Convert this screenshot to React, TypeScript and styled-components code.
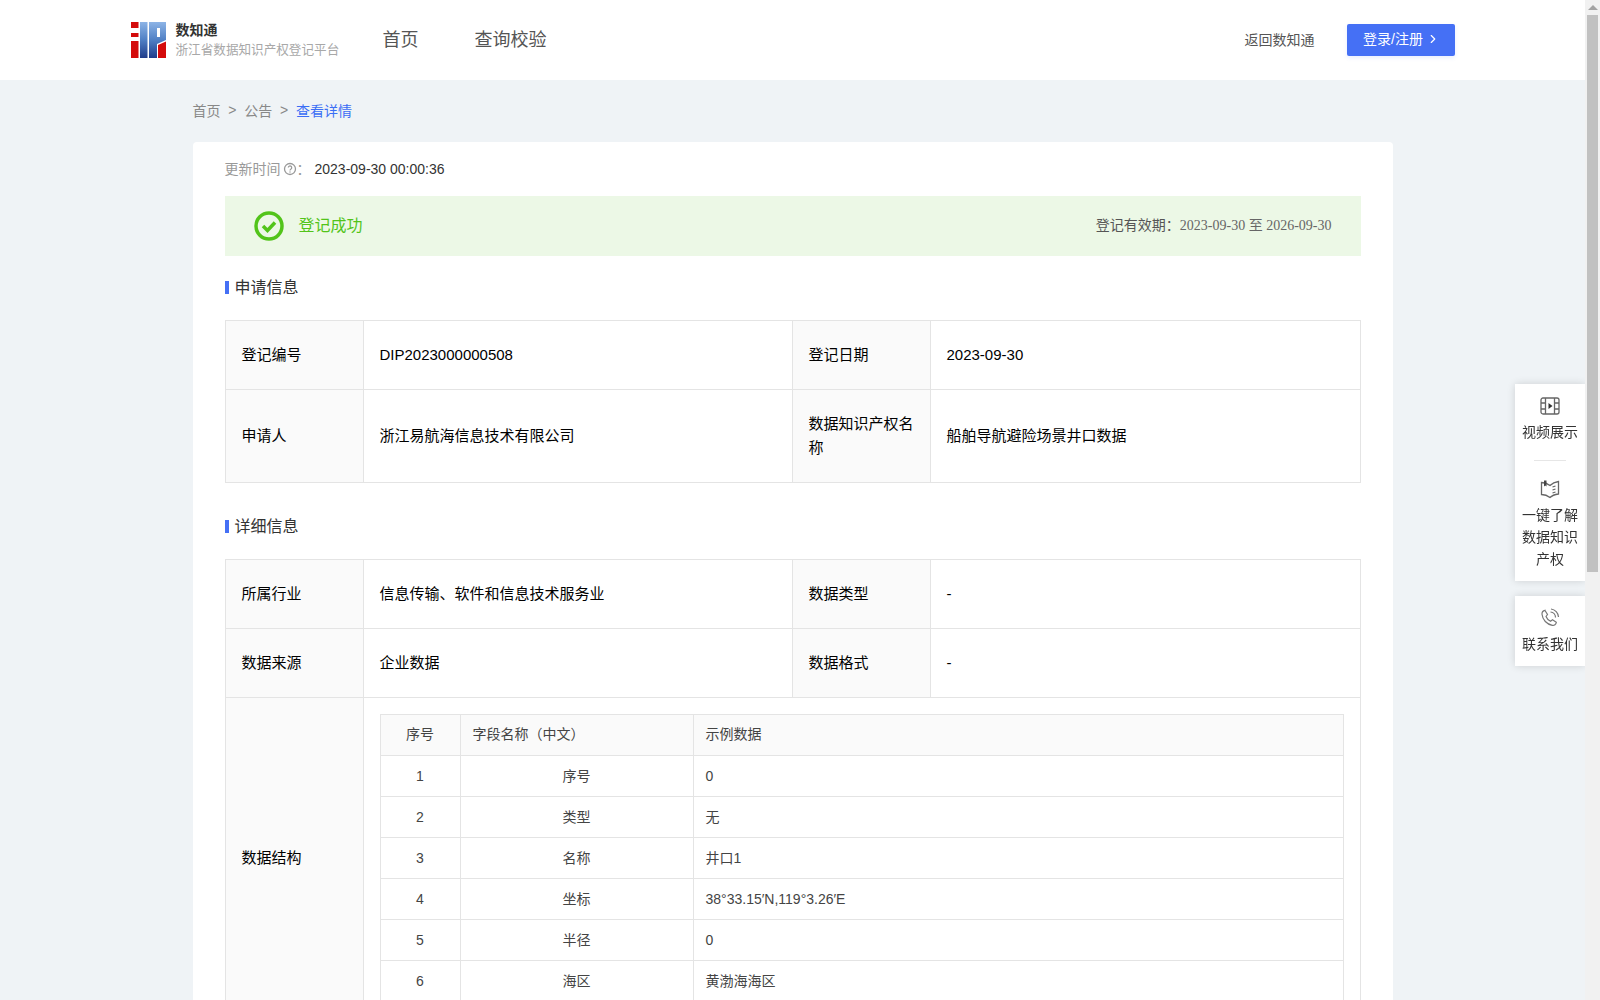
import React from "react";
import styled, { createGlobalStyle } from "styled-components";
import { ChevronRight } from "lucide-react";

const GlobalStyle = createGlobalStyle`
  html, body {
    scrollbar-width: none;
  }
  body {
    margin: 0;
    background: #eff3f6;
    font-family: "Liberation Sans", "Noto Sans CJK SC", sans-serif;
    color: #333;
  }
  * { box-sizing: border-box; }
`;

const Page = styled.div`
  width: 1585px;
  min-height: 1741px;
`;

const Header = styled.header`
  height: 80px;
  background: #fff;
`;

const HeaderInner = styled.div`
  width: 1324px;
  height: 100%;
  margin: 0 auto;
  display: flex;
  align-items: center;
`;

const Brand = styled.div`
  display: flex;
  align-items: center;
  gap: 10px;
  width: 252px;
`;

const BrandText = styled.div`
  display: flex;
  flex-direction: column;
`;

const BrandName = styled.div`
  font-size: 14px;
  font-weight: 700;
  line-height: 20px;
  margin-top: -2px;
  color: #333;
`;

const BrandSub = styled.div`
  font-size: 12.6px;
  line-height: 18px;
  margin-top: 1px;
  color: #a8a8a8;
  white-space: nowrap;
`;

const Nav = styled.nav`
  display: flex;
  gap: 56px;
  flex: 1;
  padding-bottom: 4px;
`;

const NavItem = styled.a`
  font-size: 18px;
  color: #555;
`;

const BackLink = styled.a`
  font-size: 14px;
  color: #555;
  margin-right: 32px;
  padding-bottom: 3px;
`;

const LoginButton = styled.button`
  width: 108px;
  height: 32px;
  border: 0;
  border-radius: 2px;
  background: #4570f5;
  color: #fff;
  font: inherit;
  font-size: 14px;
  padding: 0 0 5px 2px;
  display: flex;
  align-items: center;
  justify-content: center;
  gap: 3px;
  box-shadow: 0 2px 4px rgba(69, 112, 245, 0.12);
`;

const ButtonChevron = styled(ChevronRight)`
  margin-top: 3px;
`;

const Main = styled.main`
  width: 1200px;
  margin: 0 auto;
`;

const Crumbs = styled.div`
  height: 62px;
  padding-bottom: 3px;
  display: flex;
  align-items: center;
  font-size: 14px;
  color: #888;
`;

const CrumbSep = styled.span`
  margin: 0 7.8px;
`;

const CrumbCurrent = styled.span`
  color: #3b6ef5;
`;

const Card = styled.div`
  background: #fff;
  border-radius: 4px;
  padding: 0 32px;
`;

const UpdateRow = styled.div`
  height: 54px;
  display: flex;
  align-items: center;
  font-size: 14px;
  color: #999;
`;

const UpdateLabel = styled.span`
  padding-bottom: 2px;
`;

const UpdateValue = styled.span`
  color: #333;
  margin-left: 4px;
`;

const Banner = styled.div`
  height: 60px;
  background: #ecf8e6;
  display: flex;
  align-items: center;
  justify-content: space-between;
  padding: 0 29px;
  margin-bottom: 20px;
`;

const BannerStatus = styled.div`
  display: flex;
  align-items: center;
  gap: 15px;
  font-size: 16px;
  color: #52c41a;
`;

const BannerLabel = styled.span`
  padding-bottom: 4px;
`;

const BannerRange = styled.div`
  font-size: 14px;
  color: #555;
  padding-bottom: 4px;
`;

const SerifDate = styled.span`
  font-family: "Liberation Serif", "Noto Sans CJK SC", serif;
  color: #666;
`;

const SectionTitle = styled.h3`
  margin: 0 0 22px;
  height: 22px;
  display: flex;
  align-items: center;
  gap: 6px;
  font-size: 16px;
  font-weight: 400;
  color: #333;
  &::before {
    content: "";
    width: 4px;
    height: 13px;
    background: #4570f5;
  }
`;

const SectionText = styled.span`
  padding-bottom: 2px;
`;

const InfoTable = styled.table`
  width: 1135px;
  table-layout: fixed;
  border-collapse: collapse;
  margin-bottom: 32px;
`;

const InfoRow = styled.tr<{ $h: number }>`
  height: ${(p) => p.$h}px;
`;

const LabelCell = styled.td`
  border: 1px solid #e4e4e4;
  background: #fafafa;
  padding: 0 16px;
  font-size: 15px;
  line-height: 24px;
  color: #000;
`;

const ValueCell = styled.td`
  border: 1px solid #e4e4e4;
  padding: 0 16px;
  font-size: 15px;
  line-height: 24px;
  color: #000;
`;

const NestedTable = styled.table`
  width: 964px;
  table-layout: fixed;
  border-collapse: collapse;
  font-size: 14px;
`;

const NestedCell = styled.td<{ $align?: string; $head?: boolean }>`
  height: 41px;
  border: 1px solid #e4e4e4;
  padding: 0 12px ${(p) => (p.$head ? "2px" : "0")};
  text-align: ${(p) => p.$align || "left"};
  color: #444;
  background: ${(p) => (p.$head ? "#fafafa" : "#fff")};
`;

const SideDock = styled.aside`
  position: fixed;
  right: 15px;
  top: 384px;
  width: 70px;
  display: flex;
  flex-direction: column;
  gap: 15px;
`;

const DockPanel = styled.div`
  background: #fff;
  box-shadow: 0 0 8px rgba(0, 0, 0, 0.14);
  display: flex;
  flex-direction: column;
  align-items: center;
  padding: 12px 0 11px;
  font-size: 14px;
  line-height: 22px;
  color: #333;
  text-align: center;
`;

const DockItem = styled.div`
  display: flex;
  flex-direction: column;
  align-items: center;
  gap: 5px;
`;

const DockDivider = styled.div`
  width: 32px;
  height: 1px;
  background: #e6e6e6;
  margin: 17px 0 18px;
`;

const ScrollTrack = styled.div`
  position: fixed;
  top: 0;
  right: 0;
  bottom: 0;
  width: 15px;
  background: #f1f1f1;
`;

const ScrollArrow = styled.div`
  width: 0;
  height: 0;
  margin: 5px auto 0;
  border-left: 5px solid transparent;
  border-right: 5px solid transparent;
  border-bottom: 5px solid #a3a3a3;
`;

const ScrollThumb = styled.div`
  width: 11px;
  height: 557px;
  margin: 5px 2px 0;
  background: #c1c1c1;
`;

const LogoMark = () => (
  <svg width="35" height="36" viewBox="0 0 35 36">
    <defs>
      <linearGradient id="logoBlue" x1="0" y1="0" x2="0" y2="1">
        <stop offset="0" stopColor="#8db4e6" />
        <stop offset="0.5" stopColor="#4f7fc4" />
        <stop offset="1" stopColor="#1f3c8a" />
      </linearGradient>
    </defs>
    <path d="M0 0h7.500v6H0zM0 11h7.500v4H0zM0 19h7.500v17H0z" fill="#d40b0b" />
    <rect x="9" y="0" width="7.500" height="36" fill="url(#logoBlue)" />
    <path
      d="M18 0h17v18L26 22v14h-8z M26 6v9h3V6z"
      fillRule="evenodd"
      fill="url(#logoBlue)"
    />
    <path d="M27 23l8-3.500V36h-8z" fill="#d40b0b" />
  </svg>
);

const HelpIcon = () => (
  <svg width="14" height="14" viewBox="0 0 14 14" fill="none" stroke="#999" style={{ marginLeft: 2 }}>
    <circle cx="7" cy="7" r="5.500" strokeWidth="1.300" />
    <path d="M5.300 5.600a1.700 1.700 0 1 1 2.700 1.400c-.6.400-1 .7-1 1.400" strokeWidth="1.200" />
    <circle cx="7" cy="10" r=".7" fill="#999" stroke="none" />
  </svg>
);

const SuccessIcon = () => (
  <svg width="30" height="30" viewBox="0 0 30 30" fill="none">
    <circle cx="15" cy="15" r="13" stroke="#52c41a" strokeWidth="3.500" />
    <path d="M9 15l4.500 4.500L21 11.500" stroke="#52c41a" strokeWidth="3.500" />
  </svg>
);

const FilmIcon = () => (
  <svg width="20" height="20" viewBox="0 0 20 20" fill="none" stroke="#666" strokeWidth="1.300">
    <rect x="1" y="2" width="18" height="16" rx="2" />
    <path d="M5.500 2v16M14.500 2v16M1 7h4.500M1 13h4.500M14.500 7H19M14.500 13H19" />
    <path d="M8.500 7v6l4-3z" fill="#333" stroke="none" />
  </svg>
);

const BookIcon = () => (
  <svg width="20" height="20" viewBox="0 0 20 20" fill="none" stroke="#666" strokeWidth="1.300">
    <path d="M1.500 3.500c3 0 6 1 8.500 3 2-2 5-3.500 8.500-4v12.500c-3.500.5-6.500 1.500-8.500 3.500-2.500-2-5.500-3-8.500-3z" />
    <path d="M12.500 8l3-1M12.500 11l3-1M12.500 14l3-1" />
    <path d="M4 1.500h2.500v6L5.200 6.500 4 7.500z" fill="#444" stroke="none" />
  </svg>
);

const PhoneIcon = () => (
  <svg width="20" height="20" viewBox="0 0 20 20" fill="none" stroke="#777" strokeWidth="1.200">
    <path d="M5 2.500l2.500 4-1.500 2c.8 2 2.500 3.800 4.500 4.800l2-1.500 3.800 2.500c-.3 2-2 3.500-4 3-5.500-1-9.800-5.500-10.300-11-.2-2 1.200-3.600 3-4z" />
    <path d="M10.500 4a5.500 5.500 0 0 1 5 5.500M11 1a8.500 8.500 0 0 1 7.500 8" />
  </svg>
);

const fields = [
  ["1", "序号", "0"],
  ["2", "类型", "无"],
  ["3", "名称", "井口1"],
  ["4", "坐标", "38°33.15′N,119°3.26′E"],
  ["5", "半径", "0"],
  ["6", "海区", "黄渤海海区"],
];

const Columns = () => (
  <colgroup>
    <col style={{ width: 138 }} />
    <col style={{ width: 429 }} />
    <col style={{ width: 138 }} />
    <col style={{ width: 430 }} />
  </colgroup>
);

export default function App() {
  return (
    <Page>
      <GlobalStyle />
      <Header>
        <HeaderInner>
          <Brand>
            <LogoMark />
            <BrandText>
              <BrandName>数知通</BrandName>
              <BrandSub>浙江省数据知识产权登记平台</BrandSub>
            </BrandText>
          </Brand>
          <Nav>
            <NavItem>首页</NavItem>
            <NavItem>查询校验</NavItem>
          </Nav>
          <BackLink>返回数知通</BackLink>
          <LoginButton>
            登录/注册
            <ButtonChevron size={14} />
          </LoginButton>
        </HeaderInner>
      </Header>

      <Main>
        <Crumbs>
          首页<CrumbSep>&gt;</CrumbSep>公告<CrumbSep>&gt;</CrumbSep>
          <CrumbCurrent>查看详情</CrumbCurrent>
        </Crumbs>

        <Card>
          <UpdateRow>
            <UpdateLabel>更新时间</UpdateLabel>
            <HelpIcon />
            <UpdateLabel>：</UpdateLabel>
            <UpdateValue>2023-09-30 00:00:36</UpdateValue>
          </UpdateRow>

          <Banner>
            <BannerStatus>
              <SuccessIcon />
              <BannerLabel>登记成功</BannerLabel>
            </BannerStatus>
            <BannerRange>
              登记有效期：<SerifDate>2023-09-30 至 2026-09-30</SerifDate>
            </BannerRange>
          </Banner>

          <SectionTitle><SectionText>申请信息</SectionText></SectionTitle>
          <InfoTable>
            <Columns />
            <tbody>
              <InfoRow $h={69}>
                <LabelCell>登记编号</LabelCell>
                <ValueCell>DIP2023000000508</ValueCell>
                <LabelCell>登记日期</LabelCell>
                <ValueCell>2023-09-30</ValueCell>
              </InfoRow>
              <InfoRow $h={93}>
                <LabelCell>申请人</LabelCell>
                <ValueCell>浙江易航海信息技术有限公司</ValueCell>
                <LabelCell>数据知识产权名称</LabelCell>
                <ValueCell>船舶导航避险场景井口数据</ValueCell>
              </InfoRow>
            </tbody>
          </InfoTable>

          <SectionTitle><SectionText>详细信息</SectionText></SectionTitle>
          <InfoTable>
            <Columns />
            <tbody>
              <InfoRow $h={69}>
                <LabelCell>所属行业</LabelCell>
                <ValueCell>信息传输、软件和信息技术服务业</ValueCell>
                <LabelCell>数据类型</LabelCell>
                <ValueCell>-</ValueCell>
              </InfoRow>
              <InfoRow $h={69}>
                <LabelCell>数据来源</LabelCell>
                <ValueCell>企业数据</ValueCell>
                <LabelCell>数据格式</LabelCell>
                <ValueCell>-</ValueCell>
              </InfoRow>
              <InfoRow $h={320}>
                <LabelCell>数据结构</LabelCell>
                <ValueCell colSpan={3}>
                  <NestedTable>
                    <colgroup>
                      <col style={{ width: 80 }} />
                      <col style={{ width: 233 }} />
                      <col />
                    </colgroup>
                    <tbody>
                      <tr>
                        <NestedCell $head $align="center">序号</NestedCell>
                        <NestedCell $head>字段名称（中文）</NestedCell>
                        <NestedCell $head>示例数据</NestedCell>
                      </tr>
                      {fields.map(([no, name, sample]) => (
                        <tr key={no}>
                          <NestedCell $align="center">{no}</NestedCell>
                          <NestedCell $align="center">{name}</NestedCell>
                          <NestedCell>{sample}</NestedCell>
                        </tr>
                      ))}
                    </tbody>
                  </NestedTable>
                </ValueCell>
              </InfoRow>
            </tbody>
          </InfoTable>
        </Card>
      </Main>

      <SideDock>
        <DockPanel>
          <DockItem>
            <FilmIcon />
            <span>视频展示</span>
          </DockItem>
          <DockDivider />
          <DockItem>
            <BookIcon />
            <span>一键了解<br />数据知识<br />产权</span>
          </DockItem>
        </DockPanel>
        <DockPanel>
          <DockItem>
            <PhoneIcon />
            <span>联系我们</span>
          </DockItem>
        </DockPanel>
      </SideDock>

      <ScrollTrack>
        <ScrollArrow />
        <ScrollThumb />
      </ScrollTrack>
    </Page>
  );
}
